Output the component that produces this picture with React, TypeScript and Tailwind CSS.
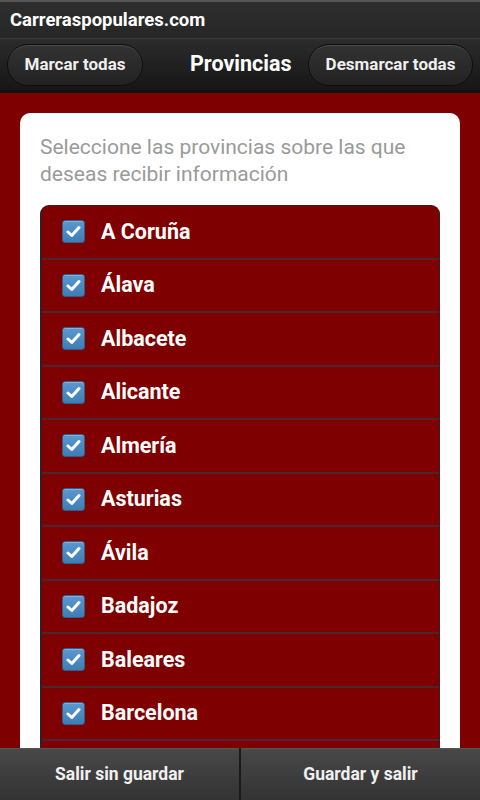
const provincias = [
  "A Coruña",
  "Álava",
  "Albacete",
  "Alicante",
  "Almería",
  "Asturias",
  "Ávila",
  "Badajoz",
  "Baleares",
  "Barcelona",
];

function CheckBox() {
  return (
    <div className="w-[23px] h-[23px] rounded-[3px] border border-[#2f5f8a] bg-gradient-to-b from-[#5a98cf] to-[#3f7db5] flex items-center justify-center shadow-[inset_0_1px_0_rgba(255,255,255,0.25)]">
      <svg width="15" height="13" viewBox="0 0 15 13">
        <path d="M2 7 L5.8 10.5 L13 2.5" fill="none" stroke="#ffffff" strokeWidth="3" strokeLinecap="round" strokeLinejoin="round" />
      </svg>
    </div>
  );
}

export default function App() {
  return (
    <div className="w-[480px] h-[800px] flex flex-col overflow-hidden bg-[#7f0000]" style={{ fontFamily: "Roboto, 'Liberation Sans', sans-serif" }}>
      {/* top title bar */}
      <div className="h-[38px] shrink-0 border-t-2 border-[#555] bg-gradient-to-b from-[#2e2e2e] to-[#262626] flex items-center px-[10px]">
        <span className="text-white font-bold text-[18.5px] leading-none">Carreraspopulares.com</span>
      </div>

      {/* header with buttons */}
      <div className="h-[55px] shrink-0 border-t border-[#3c3c3c] border-b-[3px] border-b-[#111] bg-gradient-to-b from-[#2c2c2c] to-[#161616] flex items-center px-[7px]">
        <button className="w-[136px] h-[42px] rounded-full border border-[#0e0e0e] bg-gradient-to-b from-[#333] to-[#222] shadow-[inset_0_1px_0_rgba(255,255,255,0.12)] text-[#eee] font-bold text-[17px]">
          Marcar todas
        </button>
        <span className="text-white font-bold text-[21.5px] ml-[47px]">Provincias</span>
        <button className="ml-auto w-[165px] h-[42px] rounded-full border border-[#0e0e0e] bg-gradient-to-b from-[#333] to-[#222] shadow-[inset_0_1px_0_rgba(255,255,255,0.12)] text-[#eee] font-bold text-[17px]">
          Desmarcar todas
        </button>
      </div>

      {/* content */}
      <div className="flex-1 min-h-0 overflow-hidden px-[20px] pt-[20px]">
        <div className="bg-white rounded-t-[10px] px-[20px] pt-[21px] h-full flex flex-col">
          <p className="text-[#9a9a9a] text-[21px] leading-[27px] mb-[17px]">
            Seleccione las provincias sobre las que deseas recibir información
          </p>
          <div className="flex-1 rounded-t-[9px] border-t border-l-2 border-r border-[#3b1a24] bg-[#7f0000] overflow-hidden">
            {provincias.map((p) => (
              <div key={p} className="h-[53.5px] border-b-2 border-[#4a2630] flex items-center pl-[20px] gap-[16px]">
                <CheckBox />
                <span className="text-white font-bold text-[21.5px]">{p}</span>
              </div>
            ))}
          </div>
        </div>
      </div>

      {/* bottom bar */}
      <div className="h-[52px] shrink-0 flex bg-[#222]">
        <button className="flex-1 bg-gradient-to-b from-[#484848] to-[#333] border-t border-[#555] text-[#f0f0f0] font-bold text-[17.5px]">
          Salir sin guardar
        </button>
        <div className="w-[2px] bg-[#1a1a1a]" />
        <button className="flex-1 bg-gradient-to-b from-[#484848] to-[#333] border-t border-[#555] text-[#f0f0f0] font-bold text-[17.5px]">
          Guardar y salir
        </button>
      </div>
    </div>
  );
}
